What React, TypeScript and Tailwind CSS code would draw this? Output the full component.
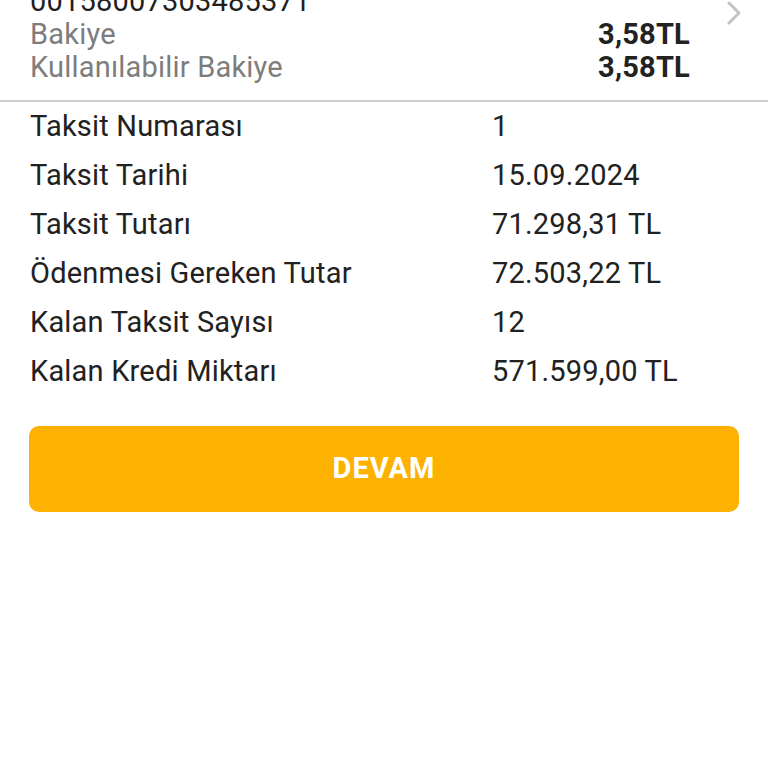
const rows = [
  ["Taksit Numarası", "1"],
  ["Taksit Tarihi", "15.09.2024"],
  ["Taksit Tutarı", "71.298,31 TL"],
  ["Ödenmesi Gereken Tutar", "72.503,22 TL"],
  ["Kalan Taksit Sayısı", "12"],
  ["Kalan Kredi Miktarı", "571.599,00 TL"],
];

export default function App() {
  return (
    <div className="h-[768px] w-[768px] overflow-hidden bg-white font-['Roboto',sans-serif] text-[29px] tracking-[0.2px] text-[#212121]">
      {/* account card, scrolled partly out of view */}
      <div className="-mt-[15px] flex pb-[16px] pl-[30px] pr-[24px]">
        <div className="flex-1 leading-[33px]">
          <div className="text-[#1f1f1f]">00158007303485371</div>
          <div className="flex justify-between text-[#7d7d7d]">
            <span>Bakiye</span>
            <span className="font-bold text-[#222]">3,58TL</span>
          </div>
          <div className="flex justify-between text-[#7d7d7d]">
            <span>Kullanılabilir Bakiye</span>
            <span className="font-bold text-[#222]">3,58TL</span>
          </div>
        </div>
        <svg className="ml-[34px] mt-[16px] h-[24px] w-[20px] shrink-0" viewBox="0 0 20 24" fill="none">
          <path d="M5 2l10 10L5 22" stroke="#c4c4c4" strokeWidth="3" strokeLinecap="round" strokeLinejoin="round" />
        </svg>
      </div>
      <div className="h-[2px] bg-[#cdcdcd]" />

      <div className="px-[30px]">
        {rows.map(([label, value]) => (
          <div key={label} className="flex h-[49px] items-center">
            <span className="w-[462px]">{label}</span>
            <span>{value}</span>
          </div>
        ))}
      </div>

      <div className="px-[29px] pt-[30px]">
        <button className="flex h-[86px] w-full items-center justify-center rounded-[10px] bg-[#fdb100] text-[29px] font-bold tracking-[1px] text-white">
          DEVAM
        </button>
      </div>
    </div>
  );
}
